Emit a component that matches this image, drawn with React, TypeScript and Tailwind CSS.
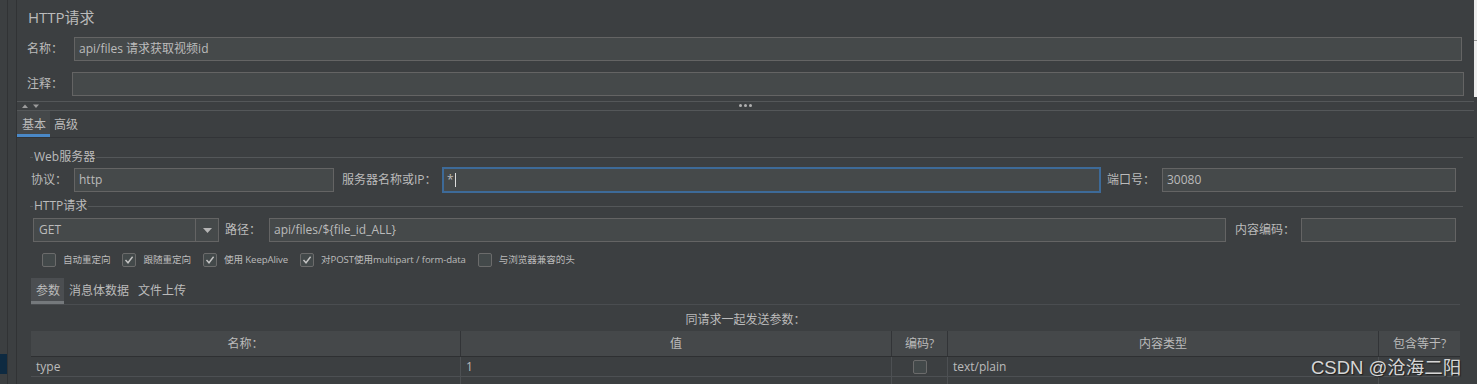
import React from "react";

const txt = "text-[#bbbbbb]";

function Field({ value, focused, className }: { value?: string; focused?: boolean; className?: string }) {
  return (
    <div
      className={`h-[24px] flex items-center bg-[#45494a] text-[12px] ${txt} ${
        focused ? "border-2 border-[#3d6a98] pl-[3px]" : "border border-[#646464] pl-[4px]"
      } ${className ?? ""}`}
    >
      {value}
      {focused ? <span className="ml-[1px] w-px h-[14px] bg-[#dddddd]" /> : null}
    </div>
  );
}

function Legend({ label }: { label: string }) {
  return (
    <div className="h-[18px] flex items-center ml-[13px] mr-[11px]">
      <div className="w-[3px] h-px bg-[#545759]" />
      <span className={`px-[1px] text-[12px] ${txt}`}>{label}</span>
      <div className="flex-1 h-px bg-[#545759]" />
    </div>
  );
}

function Check({ checked }: { checked?: boolean }) {
  return (
    <div className="w-[14px] h-[14px] shrink-0 rounded-[2px] border border-[#6b6b6b] bg-[#43494a] flex items-center justify-center">
      {checked ? (
        <svg width="10" height="10" viewBox="0 0 10 10">
          <polyline points="1.5,5 4,7.8 8.6,1.8" fill="none" stroke="#c4c4c4" strokeWidth="1.4" />
        </svg>
      ) : null}
    </div>
  );
}

function Opt({ label, checked }: { label: string; checked?: boolean }) {
  return (
    <div className="flex items-center">
      <Check checked={checked} />
      <span className={`ml-[7px] text-[9.6px] tracking-[-0.1px] ${txt}`}>{label}</span>
    </div>
  );
}

export default function App() {
  const cols = [
    { w: "w-[430px]", h: "名称：", v: "type" },
    { w: "w-[431px]", h: "值", v: "1" },
    { w: "w-[56px]", h: "编码?", v: "" },
    { w: "w-[431px]", h: "内容类型", v: "text/plain" },
    { w: "flex-1", h: "包含等于?", v: "" },
  ];

  return (
    <div className="relative w-[1477px] h-[384px] overflow-hidden bg-[#3c3f41] flex font-['Open_Sans','Noto_Sans_CJK_SC',sans-serif]">
      {/* left gutter */}
      <div className="w-[17px] h-full flex shrink-0">
        <div className="w-[7px] h-full">
          <div className="h-[354px]" />
          <div className="h-[20px] bg-[#0e2a41]" />
        </div>
        <div className="w-px h-full bg-[#313335]" />
        <div className="w-[8px]" />
        <div className="w-px h-full bg-[#313335]" />
      </div>

      {/* main */}
      <div className="flex-1 min-w-0">
        <div className={`h-[34px] flex items-center pl-[11px] text-[15px] ${txt}`}>HTTP请求</div>

        <div className="mt-[3px] flex items-center pl-[10px] pr-[12px]">
          <span className={`w-[47px] text-[12px] ${txt}`}>名称：</span>
          <Field value="api/files 请求获取视频id" className="flex-1" />
        </div>
        <div className="mt-[11px] flex items-center pl-[10px] pr-[10px]">
          <span className={`w-[45px] text-[12px] ${txt}`}>注释：</span>
          <Field className="flex-1" />
        </div>

        {/* splitter */}
        <div className="mt-[5px] h-[10px] border-y border-[#545759] flex items-center relative">
          <svg className="ml-[5px]" width="20" height="6" viewBox="0 0 20 6">
            <polygon points="0,5 3,1.5 6,5" fill="#9c9c9c" />
            <polygon points="11,1.5 17,1.5 14,5" fill="#9c9c9c" />
          </svg>
          <div className="absolute left-[722px] top-[2px] flex gap-[2px]">
            <div className="w-[3px] h-[3px] rounded-full bg-[#b0b0b0]" />
            <div className="w-[3px] h-[3px] rounded-full bg-[#b0b0b0]" />
            <div className="w-[3px] h-[3px] rounded-full bg-[#b0b0b0]" />
          </div>
        </div>

        {/* tabs */}
        <div className="h-[27px] flex border-b border-[#323437]">
          <div className={`w-[33px] h-[26px] bg-[#45484a] border-b-[3px] border-[#4a88c7] flex items-center pl-[5px] pt-[4px] text-[12px] ${txt}`}>
            基本
          </div>
          <div className={`ml-[4px] h-[26px] flex items-center pt-[1px] text-[12px] ${txt}`}>高级</div>
        </div>

        <div className="mt-[10px]">
          <Legend label="Web服务器" />
        </div>
        <div className="mt-[1px] flex items-center pl-[14px] pr-[18px]">
          <span className={`w-[43px] text-[12px] ${txt}`}>协议：</span>
          <Field value="http" className="w-[260px]" />
          <span className={`ml-[8px] w-[100px] text-[12px] ${txt}`}>服务器名称或IP：</span>
          <Field value="*" focused className="flex-1 h-[26px]" />
          <span className={`ml-[6px] w-[55px] text-[12px] ${txt}`}>端口号：</span>
          <Field value="30080" className="w-[294px]" />
        </div>

        <div className="mt-[4px]">
          <Legend label="HTTP请求" />
        </div>
        <div className="mt-[3px] flex items-center pl-[16px] pr-[18px]">
          <div className={`w-[186px] h-[24px] border border-[#646464] bg-[#45494a] flex items-center text-[12px] ${txt}`}>
            <span className="flex-1 pl-[5px]">GET</span>
            <div className="w-[23px] h-full border-l border-[#646464] flex items-center justify-center">
              <svg width="9" height="5" viewBox="0 0 9 5">
                <polygon points="0,0 9,0 4.5,5" fill="#b5b5b5" />
              </svg>
            </div>
          </div>
          <span className={`ml-[6px] w-[44px] text-[12px] ${txt}`}>路径：</span>
          <Field value="api/files/${file_id_ALL}" className="flex-1" />
          <span className={`ml-[9px] w-[66px] text-[12px] ${txt}`}>内容编码：</span>
          <Field className="w-[155px]" />
        </div>

        <div className="mt-[9px] h-[18px] flex items-center gap-[12px] pl-[25px]">
          <Opt label="自动重定向" />
          <Opt label="跟随重定向" checked />
          <Opt label="使用 KeepAlive" checked />
          <Opt label="对POST使用multipart / form-data" checked />
          <Opt label="与浏览器兼容的头" />
        </div>

        {/* sub tabs */}
        <div className="mt-[9px] ml-[14px] mr-[14px] h-[27px] flex border-b border-[#4a4d50]">
          <div className={`w-[33px] h-[26px] bg-[#4b4e51] border-b-[3px] border-[#75797c] flex items-center pl-[5px] pt-[2px] text-[12px] ${txt}`}>
            参数
          </div>
          <div className={`ml-[5px] h-[26px] flex items-center text-[12px] ${txt}`}>消息体数据</div>
          <div className={`ml-[9px] h-[26px] flex items-center text-[12px] ${txt}`}>文件上传</div>
        </div>

        <div className={`mt-[6px] ml-[14px] mr-[14px] h-[18px] flex items-center justify-center text-[12px] ${txt}`}>
          同请求一起发送参数：
        </div>

        {/* table */}
        <div className="mt-[2px] ml-[14px] mr-[14px]">
          <div className="h-[26px] flex bg-[#45484a] border-b border-[#2e3032]">
            {cols.map((c, i) => (
              <div
                key={i}
                className={`${c.w} h-full flex items-center justify-center text-[12px] ${txt} ${
                  i < cols.length - 1 ? "border-r border-[#323437]" : ""
                }`}
              >
                {c.h}
              </div>
            ))}
          </div>
          <div className="h-[20px] flex border-b border-[#4d5053]">
            {cols.map((c, i) => (
              <div
                key={i}
                className={`${c.w} h-full flex items-center text-[12px] ${txt} ${
                  i < cols.length - 1 ? "border-r border-[#4d5053]" : ""
                } ${i === 2 ? "justify-center" : "pl-[5px]"}`}
              >
                {i === 2 ? <Check /> : c.v}
              </div>
            ))}
          </div>
          <div className="h-[10px] flex">
            {cols.map((c, i) => (
              <div key={i} className={`${c.w} h-full ${i < cols.length - 1 ? "border-r border-[#4d5053]" : ""}`} />
            ))}
          </div>
        </div>
      </div>

      {/* right edge */}
      <div className="w-[3px] h-full shrink-0">
        <div className="h-[40px] bg-[#eeeeee]" />
        <div className="h-px bg-[#9a9a9a]" />
        <div className="h-[56px] bg-[#eeeeee]" />
      </div>

      <div className="absolute left-[1311px] top-[354px] text-[18.5px] text-[#d6d6d6] [text-shadow:1px_1px_1px_#1e1e1e] font-['Liberation_Sans','Noto_Sans_CJK_SC',sans-serif]">
        CSDN @沧海二阳
      </div>
    </div>
  );
}
